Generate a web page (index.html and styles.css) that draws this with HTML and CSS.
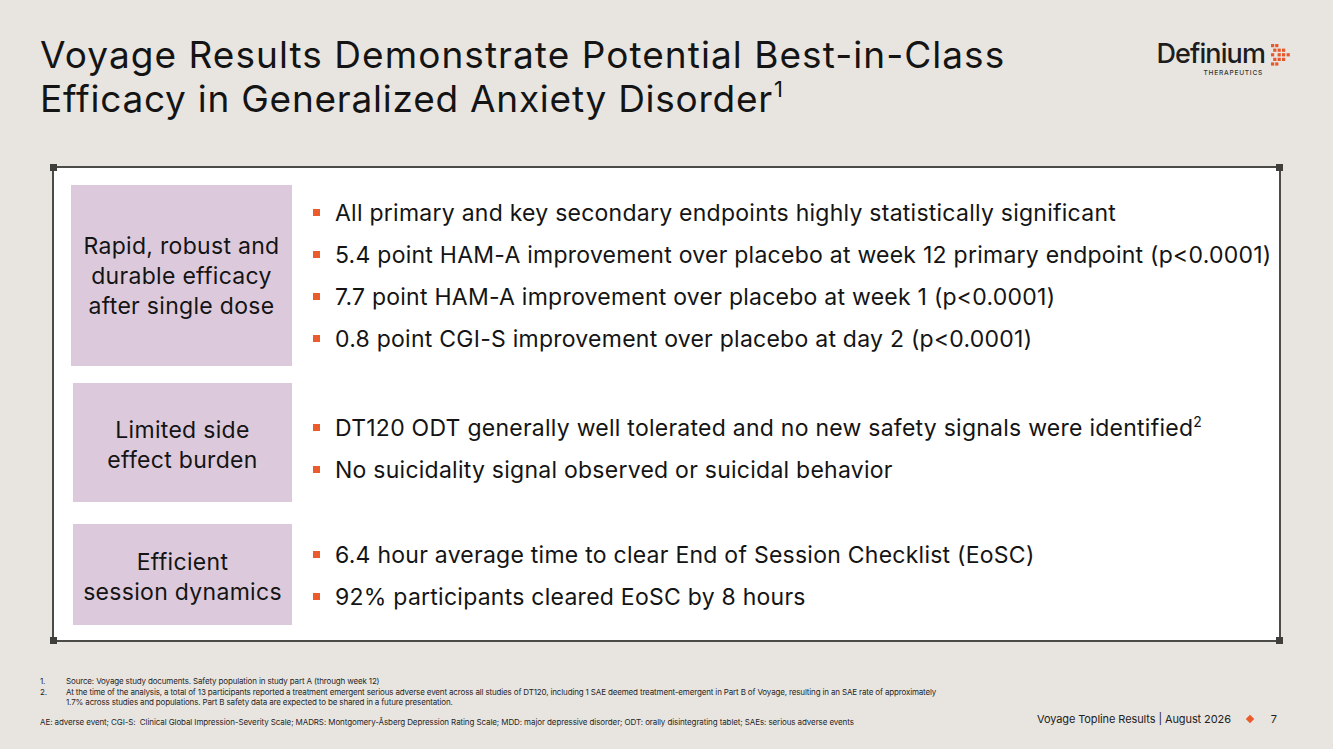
FILE: index.html
```html
<!DOCTYPE html>
<html lang="en">
<head>
<meta charset="utf-8">
<title>Voyage Results</title>
<link rel="stylesheet" href="styles.css">
</head>
<body>
<div class="slide">
  <header class="head">
    <h1 class="title">Voyage Results Demonstrate Potential Best-in-Class<br><span class="t2">Efficacy in Generalized Anxiety Disorder</span><sup>1</sup></h1>
    <div class="logo">
      <div class="logo-top">
        <span class="logo-word">Definium</span>
        <svg class="logo-mark" width="20" height="22" viewBox="0 0 20 22">
          <g fill="#e8572c">
            <rect x="0" y="0" width="3.2" height="3.2"/><rect x="4.2" y="0" width="3.2" height="3.2"/>
            <rect x="2.2" y="4.6" width="3.2" height="3.2"/><rect x="6.6" y="4.6" width="3.2" height="3.2"/><rect x="11" y="4.6" width="3.2" height="3.2"/>
            <rect x="0" y="9.2" width="3.2" height="3.2"/><rect x="6.6" y="9.2" width="3.2" height="3.2"/><rect x="11" y="9.2" width="3.2" height="3.2"/><rect x="15.6" y="9.2" width="3.2" height="3.2"/>
            <rect x="2.2" y="13.8" width="3.2" height="3.2"/><rect x="6.6" y="13.8" width="3.2" height="3.2"/><rect x="11" y="13.8" width="3.2" height="3.2"/>
            <rect x="0" y="18.4" width="3.2" height="3.2"/><rect x="4.2" y="18.4" width="3.2" height="3.2"/>
          </g>
        </svg>
      </div>
      <div class="logo-sub">THERAPEUTICS</div>
    </div>
  </header>

  <section class="panel">
    <span class="corner tl"></span><span class="corner tr"></span><span class="corner bl"></span><span class="corner br"></span>
    <div class="row row1">
      <div class="label">Rapid, robust and<br>durable efficacy<br>after single dose</div>
      <ul class="bullets">
        <li>All primary and key secondary endpoints highly statistically significant</li>
        <li>5.4 point HAM-A improvement over placebo at week 12 primary endpoint (p&lt;0.0001)</li>
        <li>7.7 point HAM-A improvement over placebo at week 1 (p&lt;0.0001)</li>
        <li>0.8 point CGI-S improvement over placebo at day 2 (p&lt;0.0001)</li>
      </ul>
    </div>
    <div class="row row2">
      <div class="label">Limited side<br>effect burden</div>
      <ul class="bullets">
        <li>DT120 ODT generally well tolerated and no new safety signals were identified<sup>2</sup></li>
        <li>No suicidality signal observed or suicidal behavior</li>
      </ul>
    </div>
    <div class="row row3">
      <div class="label">Efficient<br>session dynamics</div>
      <ul class="bullets">
        <li>6.4 hour average time to clear End of Session Checklist (EoSC)</li>
        <li>92% participants cleared EoSC by 8 hours</li>
      </ul>
    </div>
  </section>

  <footer class="foot">
    <div class="notes">
      <ol class="refs">
        <li><span class="num">1.</span><span>Source: Voyage study documents. Safety population in study part A (through week 12)</span></li>
        <li><span class="num">2.</span><span>At the time of the analysis, a total of 13 participants reported a treatment emergent serious adverse event across all studies of DT120, including 1 SAE deemed treatment-emergent in Part B of Voyage, resulting in an SAE rate of approximately<br>1.7% across studies and populations. Part B safety data are expected to be shared in a future presentation.</span></li>
      </ol>
      <p class="abbr">AE: adverse event; CGI-S:&nbsp; Clinical Global Impression-Severity Scale; MADRS: Montgomery-Åsberg Depression Rating Scale; MDD: major depressive disorder; ODT: orally disintegrating tablet; SAEs: serious adverse events</p>
    </div>
    <div class="pageinfo">
      <span>Voyage Topline Results | August 2026</span>
      <span class="diamond"></span>
      <span class="pnum">7</span>
    </div>
  </footer>
</div>
</body>
</html>
```

FILE: styles.css
```css
* { box-sizing: border-box; }
html, body { margin: 0; padding: 0; }
body {
  background: #e8e5e1;
  font-family: Inter, "Liberation Sans", sans-serif;
  color: #141414;
}
.slide {
  width: 1333px;
  height: 749px;
  display: flex;
  flex-direction: column;
  overflow: hidden;
}
.head {
  display: flex;
  justify-content: space-between;
  align-items: flex-start;
  padding: 33px 0 0 40px;
  height: 166px;
}
.title {
  margin: 0;
  font-weight: 400;
  font-size: 37px;
  line-height: 44px;
  letter-spacing: 1.05px;
  color: #141414;
}
.title .t2 { letter-spacing: 0.75px; }
.title sup {
  font-size: 22px;
  vertical-align: 15px;
  line-height: 0;
  letter-spacing: 0;
  margin-left: 1px;
}
.logo {
  margin: 7px 42px 0 0;
  display: flex;
  flex-direction: column;
  align-items: flex-end;
}
.logo-top {
  display: flex;
  align-items: center;
  gap: 6px;
}
.logo-word {
  font-size: 27px;
  font-weight: 500;
  letter-spacing: -0.9px;
  line-height: 28px;
  color: #1d1d1d;
}
.logo-mark { display: block; margin-top: 1px; }
.logo-sub {
  font-size: 6.6px;
  font-weight: 500;
  letter-spacing: 0.75px;
  color: #333;
  margin-right: 28px;
  margin-top: 1px;
}
.panel {
  position: relative;
  margin-left: 52px;
  width: 1229px;
  height: 476px;
  background: #fff;
  border: 2px solid #4d4b48;
  padding: 17px 0 0 17px;
  display: flex;
  flex-direction: column;
}
.corner {
  position: absolute;
  width: 7px;
  height: 7px;
  background: #403e3b;
}
.corner.tl { left: -4px; top: -4px; }
.corner.tr { right: -4px; top: -4px; }
.corner.bl { left: -4px; bottom: -4px; }
.corner.br { right: -4px; bottom: -4px; }
.row {
  display: flex;
  align-items: center;
}
.row1 { height: 181px; }
.row2 { height: 119px; margin-top: 17px; }
.row3 { height: 101px; margin-top: 22px; }
.label {
  width: 221px;
  height: 100%;
  background: #dccadc;
  display: flex;
  align-items: center;
  justify-content: center;
  text-align: center;
  font-size: 23px;
  line-height: 30px;
  letter-spacing: 0.3px;
  color: #141414;
  flex-shrink: 0;
}
.row2 .label, .row3 .label { margin-left: 2px; width: 219px; padding-top: 4px; }
.bullets {
  list-style: none;
  margin: 0 0 0 21px;
  padding: 0;
  display: flex;
  flex-direction: column;
  gap: 12px;
}
.row2 .bullets { margin-top: 12px; }
.row3 .bullets { margin-top: 3px; }
.bullets li {
  position: relative;
  padding-left: 22px;
  font-size: 23px;
  line-height: 30px;
  letter-spacing: 0.25px;
  color: #141414;
}
.bullets li::before {
  content: "";
  position: absolute;
  left: 0;
  top: 11px;
  width: 7px;
  height: 7px;
  background: #ec5b2b;
}
.bullets sup {
  font-size: 14px;
  vertical-align: 9px;
  line-height: 0;
  letter-spacing: 0;
}
.foot {
  display: flex;
  justify-content: space-between;
  align-items: flex-end;
  padding: 34px 0 0 40px;
}
.notes {
  width: 960px;
  font-size: 8px;
  line-height: 10.5px;
  letter-spacing: -0.15px;
  color: #262626;
}
.refs {
  list-style: none;
  margin: 0;
  padding: 0;
}
.refs li { display: flex; }
.refs .num { width: 26px; flex-shrink: 0; }
.abbr { margin: 9px 0 0 0; white-space: nowrap; letter-spacing: -0.1px; }
.pageinfo {
  display: flex;
  align-items: center;
  font-size: 11px;
  letter-spacing: -0.1px;
  color: #222;
  margin: 0 56px 1px 0;
}
.diamond {
  width: 6px;
  height: 6px;
  background: #ec5b2b;
  transform: rotate(45deg);
  margin: 0 18px 0 16px;
}
```
